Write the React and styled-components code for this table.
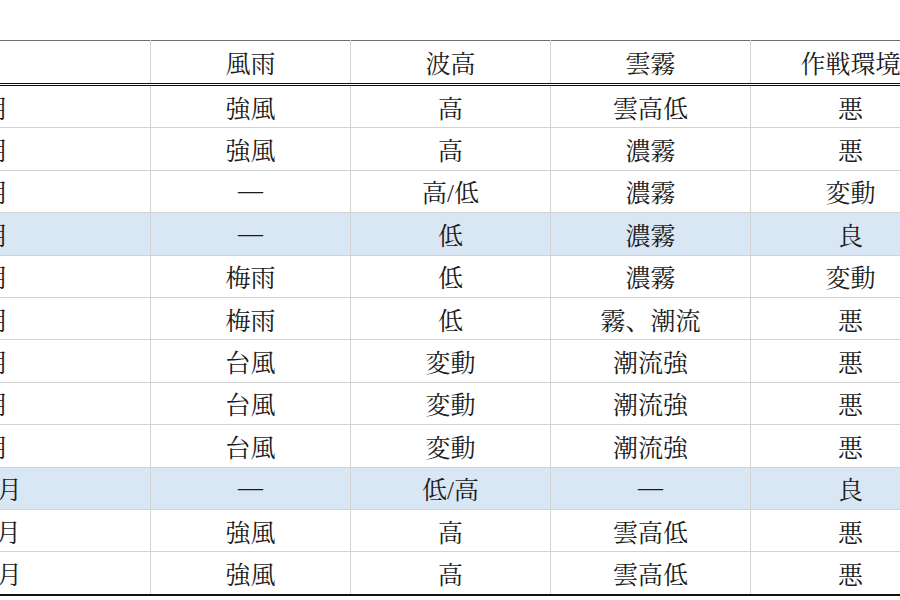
import styled, { createGlobalStyle } from 'styled-components';

const GlobalStyle = createGlobalStyle`
    html, body {
        margin: 0;
        padding: 0;
        background: #fff;
    }
`

const Page = styled.div`
    width: 900px;
    height: 600px;
    overflow: hidden;
    padding-top: 40px;
    box-sizing: border-box;
`

const Table = styled.table`
    margin-left: -40px;
    width: 990px;
    table-layout: fixed;
    border-collapse: collapse;
    border-top: 1px solid #6e6e6e;
    border-bottom: 2px solid #111;
    font-family: "Liberation Serif", "Noto Serif CJK JP", "Noto Sans CJK JP", serif;
    font-size: 25px;
    color: #1c1c1c;
`

const HeadCell = styled.th`
    width: ${p => (p.$first ? '178px' : '199px')};
    height: 42px;
    padding: 0;
    font-weight: normal;
    text-align: ${p => (p.$first ? 'left' : 'center')};
    padding-left: ${p => (p.$first ? '12px' : '0')};
    border-left: ${p => (p.$first ? 'none' : '1px solid #d4d4d4')};
    border-bottom: 3px double #111;
    white-space: nowrap;
`

const Row = styled.tr`
    background: ${p => (p.$hl ? '#d9e7f5' : '#fff')};
`

const Cell = styled.td`
    height: 41.4px;
    padding: 0;
    text-align: ${p => (p.$first ? 'left' : 'center')};
    padding-left: ${p => (p.$first ? '12px' : '0')};
    border-left: ${p => (p.$first ? 'none' : '1px solid #d4d4d4')};
    border-top: 1px solid #d2d2d2;
    white-space: nowrap;
`

const headers = ['月', '風雨', '波高', '雲霧', '作戦環境'];

const rows = [
    ['1月', '強風', '高', '雲高低', '悪'],
    ['2月', '強風', '高', '濃霧', '悪'],
    ['3月', '—', '高/低', '濃霧', '変動'],
    ['4月', '—', '低', '濃霧', '良', true],
    ['5月', '梅雨', '低', '濃霧', '変動'],
    ['6月', '梅雨', '低', '霧、潮流', '悪'],
    ['7月', '台風', '変動', '潮流強', '悪'],
    ['8月', '台風', '変動', '潮流強', '悪'],
    ['9月', '台風', '変動', '潮流強', '悪'],
    ['10月', '—', '低/高', '—', '良', true],
    ['11月', '強風', '高', '雲高低', '悪'],
    ['12月', '強風', '高', '雲高低', '悪'],
];

const App = () => {
    return (
        <>
            <GlobalStyle />
            <Page>
                <Table>
                    <thead>
                        <tr>
                            {headers.map((h, i) => (
                                <HeadCell key={h} $first={i === 0}>
                                    {i === 0 ? '' : h}
                                </HeadCell>
                            ))}
                        </tr>
                    </thead>
                    <tbody>
                        {rows.map(r => (
                            <Row key={r[0]} $hl={r[5]}>
                                {r.slice(0, 5).map((c, i) => (
                                    <Cell key={i} $first={i === 0}>{c}</Cell>
                                ))}
                            </Row>
                        ))}
                    </tbody>
                </Table>
            </Page>
        </>
    );
};

export default App
